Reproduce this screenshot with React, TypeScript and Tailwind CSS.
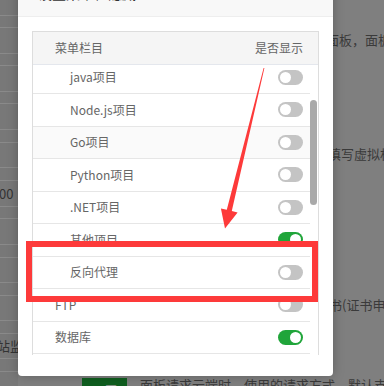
const rows = [
  { label: "java项目", indent: true, on: false },
  { label: "Node.js项目", indent: true, on: false },
  { label: "Go项目", indent: true, on: false, hover: true },
  { label: "Python项目", indent: true, on: false },
  { label: ".NET项目", indent: true, on: false },
  { label: "其他项目", indent: true, on: true },
  { label: "反向代理", indent: true, on: false },
  { label: "FTP", indent: false, on: false },
  { label: "数据库", indent: false, on: true },
];

const strip = [
  "h-[12px]", "h-[26px]", "h-[12px]", "h-[26px]", "h-[12px]", "h-[26px]",
  "h-[13px]", "h-[25px]", "h-[13px]", "h-[26px]", "h-[12px]", "h-[26px]",
  "h-[13px]", "h-[25px]", "h-[13px]", "h-[25px]", "h-[13px]", "h-[25px]",
  "h-[13px]", "h-[15px]",
];

function Toggle({ on }: { on: boolean }) {
  return (
    <div
      className={
        on
          ? "flex h-[15px] w-[25px] items-center justify-end rounded-full bg-[#20a53a] p-[2px]"
          : "flex h-[15px] w-[25px] items-center justify-start rounded-full bg-[#c4c4c4] p-[2px]"
      }
    >
      <div className="h-[11px] w-[11px] rounded-full bg-white" />
    </div>
  );
}

export default function App() {
  return (
    <div
      className="relative h-[386px] w-[384px] overflow-hidden bg-[#7f7f7f]"
      style={{ fontFamily: '"Noto Sans CJK SC", "Noto Sans", sans-serif' }}
    >
      {/* dimmed page behind the dialog */}
      <div className="flex h-full">
        <div className="flex w-[18px] shrink-0 flex-col bg-[#787878]">
          <div className="h-[15px]" />
          {strip.map((h, i) => (
            <div
              key={i}
              className={`${h} flex items-center overflow-visible whitespace-nowrap border-t border-[#8a8a8a] text-[13px] text-[#333]`}
            >
              {i === 9 && <span className="-ml-[1px]">00</span>}
              {i === 17 && <span className="-ml-[3px]">站监</span>}
            </div>
          ))}
        </div>
        <div className="flex flex-1 flex-col whitespace-nowrap pt-[31px] text-[13px] leading-[18px] text-[#3a3a3a]">
          <div className="ml-[308px]">面板，面板相关</div>
          <div className="ml-[310px] mt-[96px]">填写虚拟机</div>
          <div className="ml-[311px] mt-[133px]">书(证书申请</div>
          <div className="mt-[64px] flex items-start">
            <div className="ml-[64px] flex h-[26px] w-[45px] items-center justify-center bg-[#0f5e1f] text-[13px] text-[#9a9a9a]">
              设置
            </div>
            <div className="ml-[13px] mt-[-2px]">面板请求云端时，使用的请求方式，默认支持python</div>
          </div>
        </div>
      </div>

      {/* dialog */}
      <div className="absolute left-[18px] top-[-24px] flex h-[400px] w-[315px] flex-col rounded-[4px] bg-white shadow-[0_0_12px_rgba(0,0,0,0.25)]">
        <div className="flex h-[41px] shrink-0 items-center border-b border-[#eeeeee] bg-[#f8f8f8] px-[20px] pb-[5px] text-[14px] text-[#333]">
          设置菜单栏隐藏
        </div>
        <div className="px-[14px] pt-[14px]">
          <div className="flex flex-col border-x border-t border-[#dddddd]">
            <div className="flex h-[33px] items-center justify-between border-b border-[#e4e7ed] bg-[#f5f5f5] pl-[22px] pr-[15px] text-[12px] text-[#666]">
              <span>菜单栏目</span>
              <span>是否显示</span>
            </div>
            <div className="flex h-[290px] overflow-hidden">
              <div className="flex flex-1 flex-col">
                <div className="-mt-[3.5px]" />
                {rows.map((r) => (
                  <div
                    key={r.label}
                    className={`flex h-[32.5px] shrink-0 items-center justify-between border-b border-[#e6e6e6] pr-[7px] text-[12px] text-[#666] ${
                      r.hover ? "bg-[#fafafa]" : "bg-white"
                    } ${r.indent ? "pl-[37px]" : "pl-[22px]"}`}
                  >
                    <span>{r.label}</span>
                    <Toggle on={r.on} />
                  </div>
                ))}
              </div>
              <div className="w-[8px] shrink-0">
                <div className="mt-[35px] h-[105px] w-[7px] rounded-full bg-[#a9a9a9]" />
              </div>
            </div>
          </div>
        </div>
      </div>

      {/* annotation: red box */}
      <div className="absolute left-[26px] top-[241px] h-[61px] w-[292px] border-[6px] border-[#fd3a3a]" />

      {/* annotation: arrow */}
      <svg className="absolute left-0 top-0" width="384" height="386" viewBox="0 0 384 386">
        <polygon
          points="264.4,68 231.8,211.1 237.6,212.6 225,228.5 220.9,208.4 226.8,209.8 263.6,68"
          fill="#fd3a3a"
        />
      </svg>
    </div>
  );
}
